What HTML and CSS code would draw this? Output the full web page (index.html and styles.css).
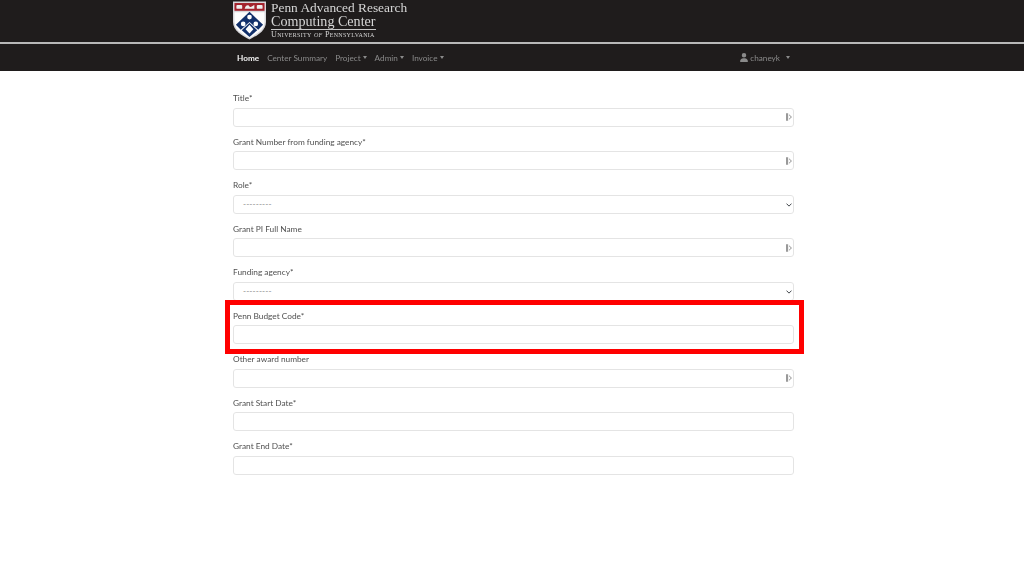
FILE: index.html
```html
<!DOCTYPE html>
<html lang="en">
<head>
<meta charset="utf-8">
<title>Penn Advanced Research Computing Center</title>
<link rel="stylesheet" href="styles.css">
</head>
<body>
<header class="brand">
  <div class="wrap brand-inner">
    <svg class="shield" viewBox="0 0 34 39" aria-hidden="true">
      <path d="M0 0H34V21C34 30 25 35 17 39C9 35 0 30 0 21Z" fill="#d8d8dc"/>
      <rect x="1.5" y="1.5" width="31" height="8" fill="#a3212c"/>
      <rect x="3.5" y="3.5" width="6" height="4" rx="1" fill="#eee"/>
      <path d="M12 7.5C13 3 16 3 17 5C18 7 20 4 22 3.5V7.5Z" fill="#eee"/>
      <rect x="24.5" y="3.5" width="6" height="4" rx="1" fill="#eee"/>
      <path d="M1.5 11H32.500V21C32.500 29 24 33.500 17 37.500C10 33.500 1.500 29 1.500 21Z" fill="#fdfdfd"/>
      <path d="M17 10.500L31 24L26 29L17 21L8 29L3 24Z" fill="#12306b"/>
      <path d="M17 22L25 29.500L17 36.500L9 29.500Z" fill="#12306b"/>
      <circle cx="17" cy="16" r="2.400" fill="#fff"/>
      <circle cx="10.500" cy="23" r="2.400" fill="#fff"/>
      <circle cx="23.500" cy="23" r="2.400" fill="#fff"/>
      <path d="M17 24L21 28.500L17 33L13 28.500Z" fill="#fff"/>
    </svg>
    <div class="wordmark">
      <div class="wm-line">Penn Advanced Research</div>
      <div class="wm-line wm-under">Computing Center</div>
      <div class="wm-univ">University <i>of</i> Pennsylvania</div>
    </div>
  </div>
</header>
<nav class="nav">
  <div class="wrap nav-inner">
    <a class="nav-link active">Home</a>
    <a class="nav-link">Center Summary</a>
    <a class="nav-link caret">Project</a>
    <a class="nav-link caret">Admin</a>
    <a class="nav-link caret">Invoice</a>
    <a class="nav-link caret user">
      <svg class="user-icon" viewBox="0 0 448 512" aria-hidden="true"><path d="M224 256A128 128 0 1 0 224 0a128 128 0 1 0 0 256zm-45.700 48C79.800 304 0 383.800 0 482.300 0 498.700 13.300 512 29.700 512h388.600c16.400 0 29.700-13.300 29.700-29.700 0-98.500-79.800-178.300-178.300-178.300z"/></svg>
      chaneyk
    </a>
  </div>
</nav>
<main class="wrap form">
  <div class="field"><label>Title*</label><div class="control"><svg class="pm" viewBox="0 0 7 9" aria-hidden="true"><path d="M0 0H2.500V9H0ZM3.500 1.200L7 4.500L3.500 7.800V6.600L5.600 4.500L3.500 2.400Z"/></svg></div></div>
  <div class="field"><label>Grant Number from funding agency*</label><div class="control"><svg class="pm" viewBox="0 0 7 9" aria-hidden="true"><path d="M0 0H2.500V9H0ZM3.500 1.200L7 4.500L3.500 7.800V6.600L5.600 4.500L3.500 2.400Z"/></svg></div></div>
  <div class="field"><label>Role*</label><div class="control select">---------<svg class="chev" viewBox="0 0 16 16" aria-hidden="true"><path d="M2 5l6 6 6-6" fill="none" stroke="#343a40" stroke-width="2.500" stroke-linecap="round" stroke-linejoin="round"/></svg></div></div>
  <div class="field"><label>Grant PI Full Name</label><div class="control"><svg class="pm" viewBox="0 0 7 9" aria-hidden="true"><path d="M0 0H2.500V9H0ZM3.500 1.200L7 4.500L3.500 7.800V6.600L5.600 4.500L3.500 2.400Z"/></svg></div></div>
  <div class="field"><label>Funding agency*</label><div class="control select">---------<svg class="chev" viewBox="0 0 16 16" aria-hidden="true"><path d="M2 5l6 6 6-6" fill="none" stroke="#343a40" stroke-width="2.500" stroke-linecap="round" stroke-linejoin="round"/></svg></div></div>
  <div class="field"><label>Penn Budget Code*</label><div class="control"></div></div>
  <div class="field"><label>Other award number</label><div class="control"><svg class="pm" viewBox="0 0 7 9" aria-hidden="true"><path d="M0 0H2.500V9H0ZM3.500 1.200L7 4.500L3.500 7.800V6.600L5.600 4.500L3.500 2.400Z"/></svg></div></div>
  <div class="field"><label>Grant Start Date*</label><div class="control"></div></div>
  <div class="field"><label>Grant End Date*</label><div class="control"></div></div>
</main>
<div class="highlight"></div>
</body>
</html>
```
FILE: styles.css
```css
* { box-sizing: border-box; }
html, body { margin: 0; height: 576px; overflow: hidden; }
body { position: relative; background: #fff; font-family: Lato, "Open Sans", "Liberation Sans", sans-serif; color: #555; }
.wrap { width: 561px; margin-left: 233px; }
.brand { height: 42px; background: #1f1c1c; overflow: hidden; }
.brand-inner { display: flex; align-items: flex-start; padding-top: 1px; filter: blur(.35px); }
.shield { width: 33px; height: 39px; flex: none; }
.wordmark { margin-left: 5px; font-family: "Liberation Serif", serif; color: #d6d6d6; }
.wm-line { font-size: 13.400px; line-height: 14px; white-space: nowrap; }
.wm-under { width: 105px; font-size: 14.100px; border-bottom: 1px solid #c8c8c8; line-height: 13.500px; }
.wm-univ { font-size: 8.200px; line-height: 10px; letter-spacing: .3px; font-variant: small-caps; white-space: nowrap; }
.nav { height: 29px; background: #1f1c1c; border-top: 2px solid #b8b8b8; }
.nav-inner { display: flex; align-items: center; height: 27px; padding-left: 4px; gap: 8px; font-size: 8.200px; color: #8a8a8a; filter: blur(.35px); }
.nav-link { white-space: nowrap; }
.active { color: #f2f2f2; font-weight: 700; }
.caret::after { content: ""; display: inline-block; margin-left: 2px; vertical-align: 2px; border-top: 3px solid currentColor; border-left: 2.500px solid transparent; border-right: 2.500px solid transparent; }
.user { margin-left: auto; margin-right: 4px; display: flex; align-items: center; gap: 2px; }
.user::after { margin-left: 4px; vertical-align: 0; }
.user-icon { width: 8px; height: 9px; fill: #8a8a8a; }
.form { padding-top: 21px; filter: blur(.35px); }
.field { height: 43.500px; }
.field label { display: block; height: 15.500px; font-size: 8.300px; line-height: 12px; color: #505050; }
.control { position: relative; display: flex; align-items: center; height: 19px; padding-left: 9px; border: 1px solid #e4e4e4; border-radius: 3px; background: #fff; font-size: 8.300px; color: #888; }
.select { letter-spacing: .1px; }
.pm { position: absolute; right: 1px; top: 4.500px; width: 6px; height: 8px; fill: #999; }
.chev { position: absolute; right: 1.500px; top: 6px; width: 6px; height: 6px; }
.highlight { position: absolute; left: 225px; top: 300px; width: 579px; height: 54px; border: 5px solid #f00; }
```
